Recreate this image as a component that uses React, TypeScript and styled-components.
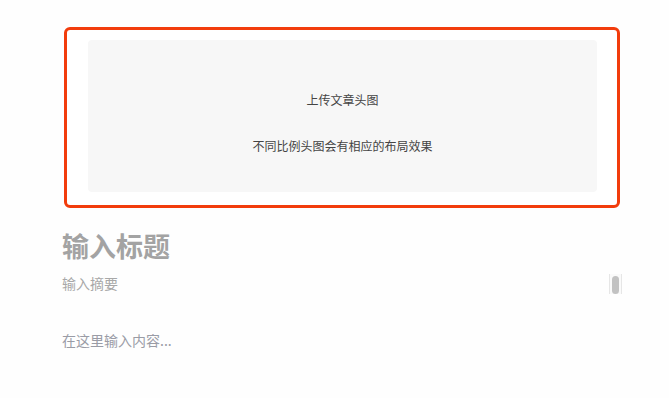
import React from "react";
import styled, { createGlobalStyle } from "styled-components";

const Global = createGlobalStyle`
  html, body { margin: 0; padding: 0; background: #fefefe; }
  body { font-family: "Noto Sans CJK SC", "Noto Sans", sans-serif; }
`;

const Page = styled.div`
  padding: 27px 47px 0 62px;
  box-sizing: border-box;
  width: 669px;
`;

const Cover = styled.div`
  margin-left: 2px;
  width: 556px;
  height: 181px;
  box-sizing: border-box;
  border: 3px solid #f23c0c;
  border-radius: 6px;
  padding: 10px 20px 13px 21px;
  background: #fff;
`;

const CoverInner = styled.div`
  height: 100%;
  background: #f7f7f7;
  border-radius: 4px;
  display: flex;
  flex-direction: column;
  align-items: center;
  padding-top: 50px;
  box-sizing: border-box;
  gap: 26px;
`;

const CoverText = styled.div`
  font-size: 12px;
  line-height: 20px;
  color: #444;
`;

const Title = styled.div`
  margin-top: 20px;
  font-size: 27px;
  line-height: 36px;
  font-weight: 700;
  color: #a3a3a3;
`;

const SummaryRow = styled.div`
  margin-top: 9px;
  display: flex;
  justify-content: space-between;
  align-items: flex-start;
`;

const Summary = styled.div`
  font-size: 14px;
  line-height: 20px;
  color: #a8a8a8;
`;

const ScrollTrack = styled.div`
  margin-top: 1px;
  width: 13px;
  height: 20px;
  box-sizing: border-box;
  border-left: 1px solid #e6e6e6;
  border-right: 1px solid #e6e6e6;
  background: #fafafa;
  display: flex;
  justify-content: center;
  padding-top: 2px;
`;

const ScrollThumb = styled.div`
  width: 7px;
  height: 18px;
  border-radius: 4px;
  background: #c2c2c2;
`;

const Content = styled.div`
  margin-top: 36px;
  font-size: 14px;
  line-height: 20px;
  color: #9a9ca6;
`;

export default function App() {
  return (
    <>
      <Global />
      <Page>
        <Cover>
          <CoverInner>
            <CoverText>上传文章头图</CoverText>
            <CoverText>不同比例头图会有相应的布局效果</CoverText>
          </CoverInner>
        </Cover>
        <Title>输入标题</Title>
        <SummaryRow>
          <Summary>输入摘要</Summary>
          <ScrollTrack>
            <ScrollThumb />
          </ScrollTrack>
        </SummaryRow>
        <Content>在这里输入内容...</Content>
      </Page>
    </>
  );
}
